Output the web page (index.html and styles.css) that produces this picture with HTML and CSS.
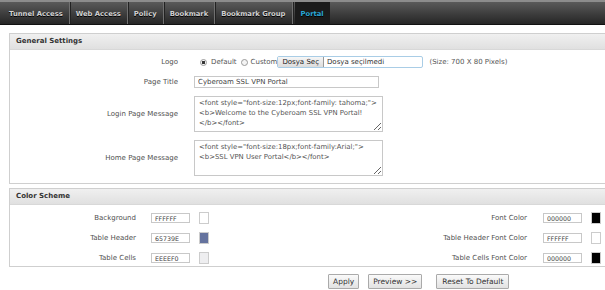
FILE: index.html
```html
<!DOCTYPE html>
<html>
<head>
<meta charset="utf-8">
    <title>Portal</title>
    <link rel="stylesheet" href="styles.css">
</head>
<body>
    <div id="tabs">
        <a class="tab">Tunnel Access</a>
        <a class="tab">Web Access</a>
        <a class="tab">Policy</a>
        <a class="tab">Bookmark</a>
        <a class="tab">Bookmark Group</a>
        <a class="tab active">Portal</a>
    </div>

    <div id="page">
        <div id="rail">
            <span class="mark mark-1"></span>
            <span class="mark mark-2"></span>
        </div>

        <div id="content">
            <div class="panel">
                <div class="panel-head">General Settings</div>
                <div class="form">
                    <label class="label">Logo</label>
                    <div class="logo-row">
                        <span class="radio checked"></span>
                        <span class="opt">Default</span>
                        <span class="radio second"></span>
                        <span class="opt">Custom</span>
                        <span class="file">
                            <span class="file-btn">Dosya Seç</span>
                            <span class="file-name">Dosya seçilmedi</span>
                        </span>
                        <span class="hint">(Size: 700 X 80 Pixels)</span>
                    </div>

                    <label class="label">Page Title</label>
                    <div><input type="text" class="text" value="Cyberoam SSL VPN Portal"></div>

                    <label class="label">Login Page Message</label>
                    <div><textarea class="area">&lt;font style="font-size:12px;font-family: tahoma;"&gt;
&lt;b&gt;Welcome to the Cyberoam SSL VPN Portal!
&lt;/b&gt;&lt;/font&gt;</textarea></div>

                    <label class="label">Home Page Message</label>
                    <div><textarea class="area">&lt;font style="font-size:18px;font-family:Arial;"&gt;
&lt;b&gt;SSL VPN User Portal&lt;/b&gt;&lt;/font&gt;</textarea></div>
                </div>
            </div>

            <div class="panel">
                <div class="panel-head">Color Scheme</div>
                <div class="colors">
                    <label class="label">Background</label>
                    <input type="text" class="hex" value="FFFFFF">
                    <span class="swatch" style="background:#ffffff"></span>
                    <label class="label">Font Color</label>
                    <input type="text" class="hex" value="000000">
                    <span class="swatch" style="background:#000000"></span>

                    <label class="label">Table Header</label>
                    <input type="text" class="hex" value="65739E">
                    <span class="swatch" style="background:#65739e"></span>
                    <label class="label">Table Header Font Color</label>
                    <input type="text" class="hex" value="FFFFFF">
                    <span class="swatch" style="background:#ffffff"></span>

                    <label class="label">Table Cells</label>
                    <input type="text" class="hex" value="EEEEF0">
                    <span class="swatch" style="background:#eeeef0"></span>
                    <label class="label">Table Cells Font Color</label>
                    <input type="text" class="hex" value="000000">
                    <span class="swatch" style="background:#000000"></span>
                </div>
            </div>

            <div class="buttons">
                <button type="button">Apply</button>
                <button type="button">Preview &gt;&gt;</button>
                <button type="button" class="wide">Reset To Default</button>
            </div>
        </div>
    </div>
</body>
</html>
```

FILE: styles.css
```css
html, body {
    margin: 0;
    background: #fff;
    overflow: hidden;
}
body {
    width: 605px;
    height: 290px;
    font-family: "DejaVu Sans", Verdana, sans-serif;
    font-size: 7px;
    color: #505050;
}
#tabs {
    display: flex;
    height: 22px;
    padding-left: 3px;
    border-top: 2px solid #8c8c8c;
    border-bottom: 1px solid #111;
    background: linear-gradient(#5a5a5a, #3a3a3a 60%, #262626);
}
.tab {
    padding: 3px 6px 0;
    line-height: 19px;
    font-size: 6.8px;
    font-weight: bold;
    color: #d2d2d2;
    text-shadow: 0 1px 0 #000;
    border-right: 1px solid #707070;
    box-shadow: 1px 0 0 #222;
}
.tab.active {
    margin-left: 2px;
    padding: 3px 6px 0;
    border-right: none;
    box-shadow: none;
    background: #1b1b1b;
    color: #2aa7d6;
}
#page {
    display: flex;
    height: 265px;
}
#rail {
    display: flex;
    flex-direction: column;
    width: 3px;
    background: #2a2a2a;
}
.mark {
    display: block;
    background: #26a6d8;
}
.mark-1 {
    margin-top: 85px;
    height: 13px;
}
.mark-2 {
    margin-top: 40px;
    height: 14px;
}
#content {
    padding: 8px 0 0 9px;
}
.panel {
    width: 610px;
    border: 1px solid #cfcfcf;
    margin-bottom: 4px;
}
.panel-head {
    height: 15px;
    line-height: 15px;
    padding-left: 6px;
    font-weight: bold;
    color: #333;
    background: linear-gradient(#f0f0f0, #e0e0e0);
    border-bottom: 1px solid #d8d8d8;
}
.form {
    display: grid;
    grid-template-columns: 168px 1fr;
    column-gap: 16px;
    row-gap: 8px;
    align-items: center;
    padding: 6px 0 7px;
}
.label {
    text-align: right;
}
.logo-row {
    display: flex;
    align-items: center;
    height: 12px;
}
.radio {
    width: 5px;
    height: 5px;
    margin: 0 4px 0 6px;
    border: 1px solid #9a9a9a;
    border-radius: 50%;
    background: #f4f4f4;
}
.radio.second {
    margin: 0 3px 0 4px;
}
.radio.checked {
    background: radial-gradient(#333 0 1.4px, #f4f4f4 1.8px);
}
.opt {
    color: #555;
}
.file {
    display: flex;
    height: 12px;
    width: 146px;
    margin-left: 0;
    border: 1px solid #a9cde6;
    box-sizing: border-box;
    border-radius: 2px;
    overflow: hidden;
}
.file-btn {
    padding: 0 4px;
    line-height: 10px;
    color: #222;
    background: linear-gradient(#f6f6f6, #dcdcdc);
    border-right: 1px solid #999;
}
.file-name {
    padding-left: 3px;
    line-height: 10px;
    color: #333;
}
.hint {
    margin-left: 6px;
    color: #555;
}
.text {
    display: block;
    box-sizing: border-box;
    width: 185px;
    height: 12px;
    padding: 0 3px;
    border: 1px solid #c8c8c8;
    font: 7px "DejaVu Sans", Verdana, sans-serif;
    color: #444;
}
.area {
    display: block;
    box-sizing: border-box;
    width: 189px;
    height: 36px;
    padding: 1px 4px;
    margin: 0;
    border: 1px solid #c8c8c8;
    font: 6.9px/10px "DejaVu Sans", Verdana, sans-serif;
    color: #555;
    overflow: hidden;
    white-space: pre;
}
.colors {
    display: grid;
    grid-template-columns: 126px 54px 19px 1fr 55px 19px;
    grid-auto-rows: 12px;
    row-gap: 8px;
    align-items: center;
    padding: 7px 19px 2px 0;
}
.hex {
    justify-self: end;
    box-sizing: border-box;
    width: 39px;
    height: 10px;
    padding: 0 3px;
    border: 1px solid #c8c8c8;
    font: 6.3px "DejaVu Sans", Verdana, sans-serif;
    color: #444;
}
.swatch {
    justify-self: end;
    display: block;
    box-sizing: border-box;
    width: 10px;
    height: 12px;
    border: 1px solid #ccc;
}
.buttons {
    display: flex;
    padding: 3px 0 0 319px;
}
.buttons button {
    height: 15px;
    padding: 0 4px;
    margin-right: 9px;
    border: 1px solid #aaa;
    border-radius: 1px;
    background: linear-gradient(#fafafa, #e2e2e2);
    font: 7.5px "DejaVu Sans", Verdana, sans-serif;
    color: #333;
}
.buttons button.wide {
    margin-left: 5px;
    padding: 0 5px;
}
```
